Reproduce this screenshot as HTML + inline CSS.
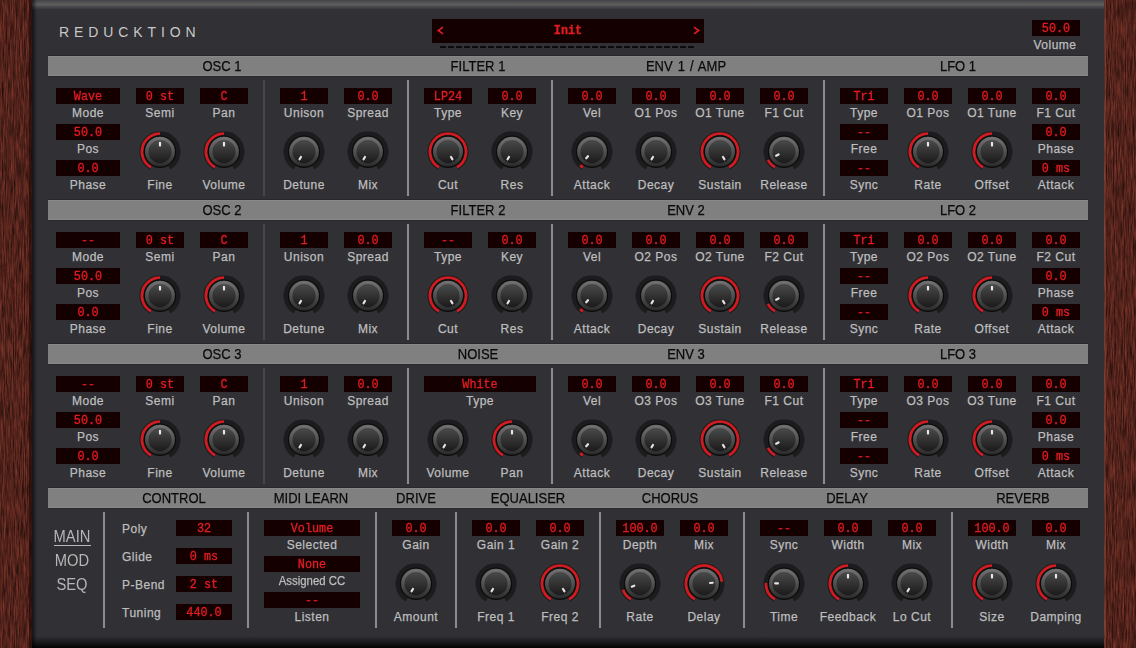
<!DOCTYPE html><html><head><meta charset="utf-8"><style>
*{margin:0;padding:0;box-sizing:border-box}
html,body{width:1136px;height:648px;overflow:hidden}
body{position:relative;background:#5a2820;font-family:"Liberation Sans",sans-serif}
.wood{position:absolute;top:0;height:648px;background:
 repeating-linear-gradient(90deg,rgba(30,8,4,.35) 0 1px,rgba(0,0,0,0) 1px 3px,rgba(120,50,35,.25) 3px 4px,rgba(0,0,0,0) 4px 6px,rgba(20,5,2,.3) 6px 7px,rgba(0,0,0,0) 7px 10px),#5c2920}
.panel{position:absolute;left:32px;top:0;width:1072px;height:648px;background:#303035}
.ptop{position:absolute;left:32px;top:0;width:1072px;height:11px;background:linear-gradient(#444448 0,#5e5e5e 4.5px,#404044 8px,#333337 9.5px,#303035 11px)}
.pbot{position:absolute;left:32px;top:636px;width:1072px;height:12px;background:linear-gradient(rgba(0,0,0,0),rgba(0,0,0,.35) 40%,rgba(0,0,0,.7) 75%,rgba(0,0,0,.92))}
.pl{position:absolute;left:32px;top:0;width:5px;height:648px;background:linear-gradient(90deg,rgba(0,0,0,.6),rgba(0,0,0,0))}
.t{position:absolute;white-space:nowrap;text-align:center;font-family:"Liberation Sans",sans-serif;-webkit-text-stroke:0.25px currentColor;letter-spacing:0.5px}
.v{position:absolute;background:#140001}
.vt{position:absolute;font-family:"Liberation Mono",monospace;font-size:11.8px;line-height:16px;color:#e41c22;text-align:center;white-space:pre;-webkit-text-stroke:0.3px #e41c22;transform:scaleY(1.1)}
.h{position:absolute;height:20px;background:#808080;border-top:1px solid #888888;border-bottom:1px solid #888888;box-shadow:0 1px 0 #28282b,0 -1px 0 #28282b}
.sep{position:absolute;width:2px;background:#8c8c8c}
.sep.d{background:#464646}
.k{position:absolute}
.title{position:absolute;left:59px;top:24px;font-size:14px;line-height:16px;letter-spacing:4.9px;color:#c8c8c8}
.preset{position:absolute;left:432px;top:19px;width:272px;height:24px;background:#140001}
.arrow{position:absolute;top:22.5px;font-family:"Liberation Sans",sans-serif;font-size:13px;line-height:16px;color:#e41c22;width:12px;text-align:center}
.dash{position:absolute;left:440px;top:46px;width:254px;height:2px;background:repeating-linear-gradient(90deg,#0a0a0a 0 6px,rgba(0,0,0,0) 6px 8px)}
.ul{position:absolute;left:54px;top:545px;width:37px;height:1px;background:#b6b6b6}
</style></head><body>
<svg width="1136" height="648" style="position:absolute;left:0;top:0">
<filter id="w2" x="0" y="0" width="100%" height="100%" color-interpolation-filters="sRGB">
<feTurbulence type="fractalNoise" baseFrequency="0.9 0.05" numOctaves="4" seed="11" result="n"/>
<feColorMatrix in="n" type="matrix" values="0.5 0 0 0 0.07  0.22 0 0 0 0.025  0.17 0 0 0 0.02  0 0 0 0 1"/>
</filter>
<rect x="0" y="0" width="32" height="648" filter="url(#w2)"/>
<rect x="1104" y="0" width="32" height="648" filter="url(#w2)"/>
<rect x="29" y="0" width="3" height="648" fill="#1a0806" opacity="0.6"/>
<rect x="1104" y="0" width="2" height="648" fill="#9a5a48" opacity="0.35"/><rect x="1103" y="0" width="1" height="648" fill="#19191c"/>
</svg>
<div class="panel"></div><div class="ptop"></div><div class="pl"></div>
<svg width="0" height="0" style="position:absolute"><defs>
<linearGradient id="gr" x1="0" y1="0" x2="0" y2="1"><stop offset="0" stop-color="#727272"/><stop offset="0.5" stop-color="#525252"/><stop offset="1" stop-color="#2a2a2a"/></linearGradient>
<linearGradient id="gf" x1="0" y1="0" x2="0" y2="1"><stop offset="0" stop-color="#4a4a4a"/><stop offset="1" stop-color="#1a1a1a"/></linearGradient>
</defs></svg>
<div class="title">REDUCKTION</div><div class="preset"></div><div class="vt" style="left:432px;top:23px;width:272px;font-weight:bold">Init</div><svg class="k" style="left:432px;top:19px" width="272" height="24"><path d="M11 8.2L6.3 11.5L11 14.8" stroke="#e41c22" stroke-width="1.6" fill="none"/><path d="M262 8.2L266.7 11.5L262 14.8" stroke="#e41c22" stroke-width="1.6" fill="none"/></svg><div class="dash"></div><div class="v" style="left:1032px;top:20px;width:48px;height:16px"></div><div class="vt" style="left:1032px;top:20.66px;width:48px">50.0</div><div class="t" style="left:995.0px;top:36.83px;width:120px;font-size:12px;line-height:16px;color:#bebebe;">Volume</div><div class="h" style="left:48px;top:56px;width:1040px"></div><div class="t" style="left:122.0px;top:57.169999999999995px;width:200px;font-size:14px;line-height:18px;color:#0a0a0a;transform:scaleX(0.93);letter-spacing:0;">OSC 1</div><div class="t" style="left:378.0px;top:57.169999999999995px;width:200px;font-size:14px;line-height:18px;color:#0a0a0a;transform:scaleX(0.93);letter-spacing:0;">FILTER 1</div><div class="t" style="left:586.0px;top:57.169999999999995px;width:200px;font-size:14px;line-height:18px;color:#0a0a0a;transform:scaleX(0.93);letter-spacing:0;word-spacing:1.5px;">ENV 1 / AMP</div><div class="t" style="left:857.5px;top:57.169999999999995px;width:200px;font-size:14px;line-height:18px;color:#0a0a0a;transform:scaleX(0.93);letter-spacing:0;">LFO 1</div><div class="v" style="left:56px;top:88px;width:64px;height:16px"></div><div class="vt" style="left:56px;top:88.66px;width:64px">Wave</div><div class="t" style="left:28.0px;top:105.03px;width:120px;font-size:12px;line-height:16px;color:#bebebe;">Mode</div><div class="v" style="left:56px;top:124px;width:64px;height:16px"></div><div class="vt" style="left:56px;top:124.66000000000001px;width:64px">50.0</div><div class="t" style="left:28.0px;top:141.03px;width:120px;font-size:12px;line-height:16px;color:#bebebe;">Pos</div><div class="v" style="left:56px;top:160px;width:64px;height:16px"></div><div class="vt" style="left:56px;top:160.66000000000003px;width:64px">0.0</div><div class="t" style="left:28.0px;top:177.03px;width:120px;font-size:12px;line-height:16px;color:#bebebe;">Phase</div><div class="v" style="left:136px;top:88px;width:48px;height:16px"></div><div class="vt" style="left:136px;top:88.66px;width:48px">0 st</div><div class="t" style="left:100.0px;top:105.03px;width:120px;font-size:12px;line-height:16px;color:#bebebe;">Semi</div><div class="v" style="left:200px;top:88px;width:48px;height:16px"></div><div class="vt" style="left:200px;top:88.66px;width:48px">C</div><div class="t" style="left:164.0px;top:105.03px;width:120px;font-size:12px;line-height:16px;color:#bebebe;">Pan</div><svg class="k" style="left:136px;top:127px" width="48" height="48"><path d="M14.76 40.65A18.48 18.48 0 1 1 33.24 40.65" stroke="#1c1c1e" stroke-width="4.05" fill="none"/><path d="M15.00 40.24A18.0 18.0 0 0 1 24.00 6.65" stroke="#d01b20" stroke-width="2.9" fill="none"/><circle cx="24" cy="24.65" r="16.45" fill="#0c0c0c"/><circle cx="24" cy="24.65" r="14.9" fill="url(#gr)"/><circle cx="24" cy="24.65" r="11.55" fill="url(#gf)"/><path d="M24.00 18.55L24.00 15.85" stroke="#e6e6e6" stroke-width="2.2" stroke-linecap="round"/></svg><div class="t" style="left:100.0px;top:176.73px;width:120px;font-size:12px;line-height:16px;color:#bebebe;">Fine</div><svg class="k" style="left:200px;top:127px" width="48" height="48"><path d="M14.76 40.65A18.48 18.48 0 1 1 33.24 40.65" stroke="#1c1c1e" stroke-width="4.05" fill="none"/><path d="M15.00 40.24A18.0 18.0 0 0 1 24.00 6.65" stroke="#d01b20" stroke-width="2.9" fill="none"/><circle cx="24" cy="24.65" r="16.45" fill="#0c0c0c"/><circle cx="24" cy="24.65" r="14.9" fill="url(#gr)"/><circle cx="24" cy="24.65" r="11.55" fill="url(#gf)"/><path d="M24.00 18.55L24.00 15.85" stroke="#e6e6e6" stroke-width="2.2" stroke-linecap="round"/></svg><div class="t" style="left:164.0px;top:176.73px;width:120px;font-size:12px;line-height:16px;color:#bebebe;">Volume</div><div class="sep d" style="left:263px;top:80px;height:116px"></div><div class="v" style="left:280px;top:88px;width:48px;height:16px"></div><div class="vt" style="left:280px;top:88.66px;width:48px">1</div><div class="t" style="left:244.0px;top:105.03px;width:120px;font-size:12px;line-height:16px;color:#bebebe;">Unison</div><div class="v" style="left:344px;top:88px;width:48px;height:16px"></div><div class="vt" style="left:344px;top:88.66px;width:48px">0.0</div><div class="t" style="left:308.0px;top:105.03px;width:120px;font-size:12px;line-height:16px;color:#bebebe;">Spread</div><svg class="k" style="left:280px;top:127px" width="48" height="48"><path d="M14.76 40.65A18.48 18.48 0 1 1 33.24 40.65" stroke="#1c1c1e" stroke-width="4.05" fill="none"/><circle cx="24" cy="24.65" r="16.45" fill="#0c0c0c"/><circle cx="24" cy="24.65" r="14.9" fill="url(#gr)"/><circle cx="24" cy="24.65" r="11.55" fill="url(#gf)"/><path d="M20.95 29.93L19.60 32.27" stroke="#e6e6e6" stroke-width="2.2" stroke-linecap="round"/></svg><div class="t" style="left:244.0px;top:176.73px;width:120px;font-size:12px;line-height:16px;color:#bebebe;">Detune</div><svg class="k" style="left:344px;top:127px" width="48" height="48"><path d="M14.76 40.65A18.48 18.48 0 1 1 33.24 40.65" stroke="#1c1c1e" stroke-width="4.05" fill="none"/><circle cx="24" cy="24.65" r="16.45" fill="#0c0c0c"/><circle cx="24" cy="24.65" r="14.9" fill="url(#gr)"/><circle cx="24" cy="24.65" r="11.55" fill="url(#gf)"/><path d="M20.95 29.93L19.60 32.27" stroke="#e6e6e6" stroke-width="2.2" stroke-linecap="round"/></svg><div class="t" style="left:308.0px;top:176.73px;width:120px;font-size:12px;line-height:16px;color:#bebebe;">Mix</div><div class="sep" style="left:407px;top:80px;height:116px"></div><div class="v" style="left:424px;top:88px;width:48px;height:16px"></div><div class="vt" style="left:424px;top:88.66px;width:48px">LP24</div><div class="t" style="left:388.0px;top:105.03px;width:120px;font-size:12px;line-height:16px;color:#bebebe;">Type</div><div class="v" style="left:488px;top:88px;width:48px;height:16px"></div><div class="vt" style="left:488px;top:88.66px;width:48px">0.0</div><div class="t" style="left:452.0px;top:105.03px;width:120px;font-size:12px;line-height:16px;color:#bebebe;">Key</div><svg class="k" style="left:424px;top:127px" width="48" height="48"><path d="M14.76 40.65A18.48 18.48 0 1 1 33.24 40.65" stroke="#1c1c1e" stroke-width="4.05" fill="none"/><path d="M15.00 40.24A18.0 18.0 0 1 1 33.00 40.24" stroke="#d01b20" stroke-width="2.9" fill="none"/><circle cx="24" cy="24.65" r="16.45" fill="#0c0c0c"/><circle cx="24" cy="24.65" r="14.9" fill="url(#gr)"/><circle cx="24" cy="24.65" r="11.55" fill="url(#gf)"/><path d="M27.05 29.93L28.40 32.27" stroke="#e6e6e6" stroke-width="2.2" stroke-linecap="round"/></svg><div class="t" style="left:388.0px;top:176.73px;width:120px;font-size:12px;line-height:16px;color:#bebebe;">Cut</div><svg class="k" style="left:488px;top:127px" width="48" height="48"><path d="M14.76 40.65A18.48 18.48 0 1 1 33.24 40.65" stroke="#1c1c1e" stroke-width="4.05" fill="none"/><circle cx="24" cy="24.65" r="16.45" fill="#0c0c0c"/><circle cx="24" cy="24.65" r="14.9" fill="url(#gr)"/><circle cx="24" cy="24.65" r="11.55" fill="url(#gf)"/><path d="M20.95 29.93L19.60 32.27" stroke="#e6e6e6" stroke-width="2.2" stroke-linecap="round"/></svg><div class="t" style="left:452.0px;top:176.73px;width:120px;font-size:12px;line-height:16px;color:#bebebe;">Res</div><div class="sep" style="left:551px;top:80px;height:116px"></div><div class="v" style="left:568px;top:88px;width:48px;height:16px"></div><div class="vt" style="left:568px;top:88.66px;width:48px">0.0</div><div class="t" style="left:532.0px;top:105.03px;width:120px;font-size:12px;line-height:16px;color:#bebebe;">Vel</div><div class="v" style="left:632px;top:88px;width:48px;height:16px"></div><div class="vt" style="left:632px;top:88.66px;width:48px">0.0</div><div class="t" style="left:596.0px;top:105.03px;width:120px;font-size:12px;line-height:16px;color:#bebebe;">O1 Pos</div><div class="v" style="left:696px;top:88px;width:48px;height:16px"></div><div class="vt" style="left:696px;top:88.66px;width:48px">0.0</div><div class="t" style="left:660.0px;top:105.03px;width:120px;font-size:12px;line-height:16px;color:#bebebe;">O1 Tune</div><div class="v" style="left:760px;top:88px;width:48px;height:16px"></div><div class="vt" style="left:760px;top:88.66px;width:48px">0.0</div><div class="t" style="left:724.0px;top:105.03px;width:120px;font-size:12px;line-height:16px;color:#bebebe;">F1 Cut</div><svg class="k" style="left:568px;top:127px" width="48" height="48"><path d="M14.76 40.65A18.48 18.48 0 1 1 33.24 40.65" stroke="#1c1c1e" stroke-width="4.05" fill="none"/><path d="M15.00 40.24A18.0 18.0 0 0 1 12.17 38.21" stroke="#d01b20" stroke-width="2.9" fill="none"/><circle cx="24" cy="24.65" r="16.45" fill="#0c0c0c"/><circle cx="24" cy="24.65" r="14.9" fill="url(#gr)"/><circle cx="24" cy="24.65" r="11.55" fill="url(#gf)"/><path d="M19.99 29.25L18.22 31.28" stroke="#e6e6e6" stroke-width="2.2" stroke-linecap="round"/></svg><div class="t" style="left:532.0px;top:176.73px;width:120px;font-size:12px;line-height:16px;color:#bebebe;">Attack</div><svg class="k" style="left:632px;top:127px" width="48" height="48"><path d="M14.76 40.65A18.48 18.48 0 1 1 33.24 40.65" stroke="#1c1c1e" stroke-width="4.05" fill="none"/><circle cx="24" cy="24.65" r="16.45" fill="#0c0c0c"/><circle cx="24" cy="24.65" r="14.9" fill="url(#gr)"/><circle cx="24" cy="24.65" r="11.55" fill="url(#gf)"/><path d="M20.95 29.93L19.60 32.27" stroke="#e6e6e6" stroke-width="2.2" stroke-linecap="round"/></svg><div class="t" style="left:596.0px;top:176.73px;width:120px;font-size:12px;line-height:16px;color:#bebebe;">Decay</div><svg class="k" style="left:696px;top:127px" width="48" height="48"><path d="M14.76 40.65A18.48 18.48 0 1 1 33.24 40.65" stroke="#1c1c1e" stroke-width="4.05" fill="none"/><path d="M15.00 40.24A18.0 18.0 0 1 1 33.00 40.24" stroke="#d01b20" stroke-width="2.9" fill="none"/><circle cx="24" cy="24.65" r="16.45" fill="#0c0c0c"/><circle cx="24" cy="24.65" r="14.9" fill="url(#gr)"/><circle cx="24" cy="24.65" r="11.55" fill="url(#gf)"/><path d="M27.05 29.93L28.40 32.27" stroke="#e6e6e6" stroke-width="2.2" stroke-linecap="round"/></svg><div class="t" style="left:660.0px;top:176.73px;width:120px;font-size:12px;line-height:16px;color:#bebebe;">Sustain</div><svg class="k" style="left:760px;top:127px" width="48" height="48"><path d="M14.76 40.65A18.48 18.48 0 1 1 33.24 40.65" stroke="#1c1c1e" stroke-width="4.05" fill="none"/><path d="M15.00 40.24A18.0 18.0 0 0 1 7.96 32.82" stroke="#d01b20" stroke-width="2.9" fill="none"/><circle cx="24" cy="24.65" r="16.45" fill="#0c0c0c"/><circle cx="24" cy="24.65" r="14.9" fill="url(#gr)"/><circle cx="24" cy="24.65" r="11.55" fill="url(#gf)"/><path d="M18.56 27.42L16.16 28.65" stroke="#e6e6e6" stroke-width="2.2" stroke-linecap="round"/></svg><div class="t" style="left:724.0px;top:176.73px;width:120px;font-size:12px;line-height:16px;color:#bebebe;">Release</div><div class="sep" style="left:823px;top:80px;height:116px"></div><div class="v" style="left:840px;top:88px;width:48px;height:16px"></div><div class="vt" style="left:840px;top:88.66px;width:48px">Tri</div><div class="t" style="left:804.0px;top:105.03px;width:120px;font-size:12px;line-height:16px;color:#bebebe;">Type</div><div class="v" style="left:904px;top:88px;width:48px;height:16px"></div><div class="vt" style="left:904px;top:88.66px;width:48px">0.0</div><div class="t" style="left:868.0px;top:105.03px;width:120px;font-size:12px;line-height:16px;color:#bebebe;">O1 Pos</div><div class="v" style="left:968px;top:88px;width:48px;height:16px"></div><div class="vt" style="left:968px;top:88.66px;width:48px">0.0</div><div class="t" style="left:932.0px;top:105.03px;width:120px;font-size:12px;line-height:16px;color:#bebebe;">O1 Tune</div><div class="v" style="left:1032px;top:88px;width:48px;height:16px"></div><div class="vt" style="left:1032px;top:88.66px;width:48px">0.0</div><div class="t" style="left:996.0px;top:105.03px;width:120px;font-size:12px;line-height:16px;color:#bebebe;">F1 Cut</div><div class="v" style="left:840px;top:124px;width:48px;height:16px"></div><div class="vt" style="left:840px;top:124.66000000000001px;width:48px">--</div><div class="t" style="left:804.0px;top:141.03px;width:120px;font-size:12px;line-height:16px;color:#bebebe;">Free</div><div class="v" style="left:840px;top:160px;width:48px;height:16px"></div><div class="vt" style="left:840px;top:160.66000000000003px;width:48px">--</div><div class="t" style="left:804.0px;top:177.03px;width:120px;font-size:12px;line-height:16px;color:#bebebe;">Sync</div><div class="v" style="left:1032px;top:124px;width:48px;height:16px"></div><div class="vt" style="left:1032px;top:124.66000000000001px;width:48px">0.0</div><div class="t" style="left:996.0px;top:141.03px;width:120px;font-size:12px;line-height:16px;color:#bebebe;">Phase</div><div class="v" style="left:1032px;top:160px;width:48px;height:16px"></div><div class="vt" style="left:1032px;top:160.66000000000003px;width:48px">0 ms</div><div class="t" style="left:996.0px;top:177.03px;width:120px;font-size:12px;line-height:16px;color:#bebebe;">Attack</div><svg class="k" style="left:904px;top:127px" width="48" height="48"><path d="M14.76 40.65A18.48 18.48 0 1 1 33.24 40.65" stroke="#1c1c1e" stroke-width="4.05" fill="none"/><path d="M15.00 40.24A18.0 18.0 0 0 1 24.00 6.65" stroke="#d01b20" stroke-width="2.9" fill="none"/><circle cx="24" cy="24.65" r="16.45" fill="#0c0c0c"/><circle cx="24" cy="24.65" r="14.9" fill="url(#gr)"/><circle cx="24" cy="24.65" r="11.55" fill="url(#gf)"/><path d="M24.00 18.55L24.00 15.85" stroke="#e6e6e6" stroke-width="2.2" stroke-linecap="round"/></svg><div class="t" style="left:868.0px;top:176.73px;width:120px;font-size:12px;line-height:16px;color:#bebebe;">Rate</div><svg class="k" style="left:968px;top:127px" width="48" height="48"><path d="M14.76 40.65A18.48 18.48 0 1 1 33.24 40.65" stroke="#1c1c1e" stroke-width="4.05" fill="none"/><path d="M15.00 40.24A18.0 18.0 0 0 1 24.00 6.65" stroke="#d01b20" stroke-width="2.9" fill="none"/><circle cx="24" cy="24.65" r="16.45" fill="#0c0c0c"/><circle cx="24" cy="24.65" r="14.9" fill="url(#gr)"/><circle cx="24" cy="24.65" r="11.55" fill="url(#gf)"/><path d="M24.00 18.55L24.00 15.85" stroke="#e6e6e6" stroke-width="2.2" stroke-linecap="round"/></svg><div class="t" style="left:932.0px;top:176.73px;width:120px;font-size:12px;line-height:16px;color:#bebebe;">Offset</div><div class="h" style="left:48px;top:200px;width:1040px"></div><div class="t" style="left:122.0px;top:201.17000000000002px;width:200px;font-size:14px;line-height:18px;color:#0a0a0a;transform:scaleX(0.93);letter-spacing:0;">OSC 2</div><div class="t" style="left:378.0px;top:201.17000000000002px;width:200px;font-size:14px;line-height:18px;color:#0a0a0a;transform:scaleX(0.93);letter-spacing:0;">FILTER 2</div><div class="t" style="left:586.0px;top:201.17000000000002px;width:200px;font-size:14px;line-height:18px;color:#0a0a0a;transform:scaleX(0.93);letter-spacing:0;">ENV 2</div><div class="t" style="left:857.5px;top:201.17000000000002px;width:200px;font-size:14px;line-height:18px;color:#0a0a0a;transform:scaleX(0.93);letter-spacing:0;">LFO 2</div><div class="v" style="left:56px;top:232px;width:64px;height:16px"></div><div class="vt" style="left:56px;top:232.66000000000003px;width:64px">--</div><div class="t" style="left:28.0px;top:249.03px;width:120px;font-size:12px;line-height:16px;color:#bebebe;">Mode</div><div class="v" style="left:56px;top:268px;width:64px;height:16px"></div><div class="vt" style="left:56px;top:268.66px;width:64px">50.0</div><div class="t" style="left:28.0px;top:285.03px;width:120px;font-size:12px;line-height:16px;color:#bebebe;">Pos</div><div class="v" style="left:56px;top:304px;width:64px;height:16px"></div><div class="vt" style="left:56px;top:304.66px;width:64px">0.0</div><div class="t" style="left:28.0px;top:321.03px;width:120px;font-size:12px;line-height:16px;color:#bebebe;">Phase</div><div class="v" style="left:136px;top:232px;width:48px;height:16px"></div><div class="vt" style="left:136px;top:232.66000000000003px;width:48px">0 st</div><div class="t" style="left:100.0px;top:249.03px;width:120px;font-size:12px;line-height:16px;color:#bebebe;">Semi</div><div class="v" style="left:200px;top:232px;width:48px;height:16px"></div><div class="vt" style="left:200px;top:232.66000000000003px;width:48px">C</div><div class="t" style="left:164.0px;top:249.03px;width:120px;font-size:12px;line-height:16px;color:#bebebe;">Pan</div><svg class="k" style="left:136px;top:271px" width="48" height="48"><path d="M14.76 40.65A18.48 18.48 0 1 1 33.24 40.65" stroke="#1c1c1e" stroke-width="4.05" fill="none"/><path d="M15.00 40.24A18.0 18.0 0 0 1 24.00 6.65" stroke="#d01b20" stroke-width="2.9" fill="none"/><circle cx="24" cy="24.65" r="16.45" fill="#0c0c0c"/><circle cx="24" cy="24.65" r="14.9" fill="url(#gr)"/><circle cx="24" cy="24.65" r="11.55" fill="url(#gf)"/><path d="M24.00 18.55L24.00 15.85" stroke="#e6e6e6" stroke-width="2.2" stroke-linecap="round"/></svg><div class="t" style="left:100.0px;top:320.72999999999996px;width:120px;font-size:12px;line-height:16px;color:#bebebe;">Fine</div><svg class="k" style="left:200px;top:271px" width="48" height="48"><path d="M14.76 40.65A18.48 18.48 0 1 1 33.24 40.65" stroke="#1c1c1e" stroke-width="4.05" fill="none"/><path d="M15.00 40.24A18.0 18.0 0 0 1 24.00 6.65" stroke="#d01b20" stroke-width="2.9" fill="none"/><circle cx="24" cy="24.65" r="16.45" fill="#0c0c0c"/><circle cx="24" cy="24.65" r="14.9" fill="url(#gr)"/><circle cx="24" cy="24.65" r="11.55" fill="url(#gf)"/><path d="M24.00 18.55L24.00 15.85" stroke="#e6e6e6" stroke-width="2.2" stroke-linecap="round"/></svg><div class="t" style="left:164.0px;top:320.72999999999996px;width:120px;font-size:12px;line-height:16px;color:#bebebe;">Volume</div><div class="sep d" style="left:263px;top:224px;height:116px"></div><div class="v" style="left:280px;top:232px;width:48px;height:16px"></div><div class="vt" style="left:280px;top:232.66000000000003px;width:48px">1</div><div class="t" style="left:244.0px;top:249.03px;width:120px;font-size:12px;line-height:16px;color:#bebebe;">Unison</div><div class="v" style="left:344px;top:232px;width:48px;height:16px"></div><div class="vt" style="left:344px;top:232.66000000000003px;width:48px">0.0</div><div class="t" style="left:308.0px;top:249.03px;width:120px;font-size:12px;line-height:16px;color:#bebebe;">Spread</div><svg class="k" style="left:280px;top:271px" width="48" height="48"><path d="M14.76 40.65A18.48 18.48 0 1 1 33.24 40.65" stroke="#1c1c1e" stroke-width="4.05" fill="none"/><circle cx="24" cy="24.65" r="16.45" fill="#0c0c0c"/><circle cx="24" cy="24.65" r="14.9" fill="url(#gr)"/><circle cx="24" cy="24.65" r="11.55" fill="url(#gf)"/><path d="M20.95 29.93L19.60 32.27" stroke="#e6e6e6" stroke-width="2.2" stroke-linecap="round"/></svg><div class="t" style="left:244.0px;top:320.72999999999996px;width:120px;font-size:12px;line-height:16px;color:#bebebe;">Detune</div><svg class="k" style="left:344px;top:271px" width="48" height="48"><path d="M14.76 40.65A18.48 18.48 0 1 1 33.24 40.65" stroke="#1c1c1e" stroke-width="4.05" fill="none"/><circle cx="24" cy="24.65" r="16.45" fill="#0c0c0c"/><circle cx="24" cy="24.65" r="14.9" fill="url(#gr)"/><circle cx="24" cy="24.65" r="11.55" fill="url(#gf)"/><path d="M20.95 29.93L19.60 32.27" stroke="#e6e6e6" stroke-width="2.2" stroke-linecap="round"/></svg><div class="t" style="left:308.0px;top:320.72999999999996px;width:120px;font-size:12px;line-height:16px;color:#bebebe;">Mix</div><div class="sep" style="left:407px;top:224px;height:116px"></div><div class="v" style="left:424px;top:232px;width:48px;height:16px"></div><div class="vt" style="left:424px;top:232.66000000000003px;width:48px">--</div><div class="t" style="left:388.0px;top:249.03px;width:120px;font-size:12px;line-height:16px;color:#bebebe;">Type</div><div class="v" style="left:488px;top:232px;width:48px;height:16px"></div><div class="vt" style="left:488px;top:232.66000000000003px;width:48px">0.0</div><div class="t" style="left:452.0px;top:249.03px;width:120px;font-size:12px;line-height:16px;color:#bebebe;">Key</div><svg class="k" style="left:424px;top:271px" width="48" height="48"><path d="M14.76 40.65A18.48 18.48 0 1 1 33.24 40.65" stroke="#1c1c1e" stroke-width="4.05" fill="none"/><path d="M15.00 40.24A18.0 18.0 0 1 1 33.00 40.24" stroke="#d01b20" stroke-width="2.9" fill="none"/><circle cx="24" cy="24.65" r="16.45" fill="#0c0c0c"/><circle cx="24" cy="24.65" r="14.9" fill="url(#gr)"/><circle cx="24" cy="24.65" r="11.55" fill="url(#gf)"/><path d="M27.05 29.93L28.40 32.27" stroke="#e6e6e6" stroke-width="2.2" stroke-linecap="round"/></svg><div class="t" style="left:388.0px;top:320.72999999999996px;width:120px;font-size:12px;line-height:16px;color:#bebebe;">Cut</div><svg class="k" style="left:488px;top:271px" width="48" height="48"><path d="M14.76 40.65A18.48 18.48 0 1 1 33.24 40.65" stroke="#1c1c1e" stroke-width="4.05" fill="none"/><circle cx="24" cy="24.65" r="16.45" fill="#0c0c0c"/><circle cx="24" cy="24.65" r="14.9" fill="url(#gr)"/><circle cx="24" cy="24.65" r="11.55" fill="url(#gf)"/><path d="M20.95 29.93L19.60 32.27" stroke="#e6e6e6" stroke-width="2.2" stroke-linecap="round"/></svg><div class="t" style="left:452.0px;top:320.72999999999996px;width:120px;font-size:12px;line-height:16px;color:#bebebe;">Res</div><div class="sep" style="left:551px;top:224px;height:116px"></div><div class="v" style="left:568px;top:232px;width:48px;height:16px"></div><div class="vt" style="left:568px;top:232.66000000000003px;width:48px">0.0</div><div class="t" style="left:532.0px;top:249.03px;width:120px;font-size:12px;line-height:16px;color:#bebebe;">Vel</div><div class="v" style="left:632px;top:232px;width:48px;height:16px"></div><div class="vt" style="left:632px;top:232.66000000000003px;width:48px">0.0</div><div class="t" style="left:596.0px;top:249.03px;width:120px;font-size:12px;line-height:16px;color:#bebebe;">O2 Pos</div><div class="v" style="left:696px;top:232px;width:48px;height:16px"></div><div class="vt" style="left:696px;top:232.66000000000003px;width:48px">0.0</div><div class="t" style="left:660.0px;top:249.03px;width:120px;font-size:12px;line-height:16px;color:#bebebe;">O2 Tune</div><div class="v" style="left:760px;top:232px;width:48px;height:16px"></div><div class="vt" style="left:760px;top:232.66000000000003px;width:48px">0.0</div><div class="t" style="left:724.0px;top:249.03px;width:120px;font-size:12px;line-height:16px;color:#bebebe;">F2 Cut</div><svg class="k" style="left:568px;top:271px" width="48" height="48"><path d="M14.76 40.65A18.48 18.48 0 1 1 33.24 40.65" stroke="#1c1c1e" stroke-width="4.05" fill="none"/><path d="M15.00 40.24A18.0 18.0 0 0 1 12.17 38.21" stroke="#d01b20" stroke-width="2.9" fill="none"/><circle cx="24" cy="24.65" r="16.45" fill="#0c0c0c"/><circle cx="24" cy="24.65" r="14.9" fill="url(#gr)"/><circle cx="24" cy="24.65" r="11.55" fill="url(#gf)"/><path d="M19.99 29.25L18.22 31.28" stroke="#e6e6e6" stroke-width="2.2" stroke-linecap="round"/></svg><div class="t" style="left:532.0px;top:320.72999999999996px;width:120px;font-size:12px;line-height:16px;color:#bebebe;">Attack</div><svg class="k" style="left:632px;top:271px" width="48" height="48"><path d="M14.76 40.65A18.48 18.48 0 1 1 33.24 40.65" stroke="#1c1c1e" stroke-width="4.05" fill="none"/><circle cx="24" cy="24.65" r="16.45" fill="#0c0c0c"/><circle cx="24" cy="24.65" r="14.9" fill="url(#gr)"/><circle cx="24" cy="24.65" r="11.55" fill="url(#gf)"/><path d="M20.95 29.93L19.60 32.27" stroke="#e6e6e6" stroke-width="2.2" stroke-linecap="round"/></svg><div class="t" style="left:596.0px;top:320.72999999999996px;width:120px;font-size:12px;line-height:16px;color:#bebebe;">Decay</div><svg class="k" style="left:696px;top:271px" width="48" height="48"><path d="M14.76 40.65A18.48 18.48 0 1 1 33.24 40.65" stroke="#1c1c1e" stroke-width="4.05" fill="none"/><path d="M15.00 40.24A18.0 18.0 0 1 1 33.00 40.24" stroke="#d01b20" stroke-width="2.9" fill="none"/><circle cx="24" cy="24.65" r="16.45" fill="#0c0c0c"/><circle cx="24" cy="24.65" r="14.9" fill="url(#gr)"/><circle cx="24" cy="24.65" r="11.55" fill="url(#gf)"/><path d="M27.05 29.93L28.40 32.27" stroke="#e6e6e6" stroke-width="2.2" stroke-linecap="round"/></svg><div class="t" style="left:660.0px;top:320.72999999999996px;width:120px;font-size:12px;line-height:16px;color:#bebebe;">Sustain</div><svg class="k" style="left:760px;top:271px" width="48" height="48"><path d="M14.76 40.65A18.48 18.48 0 1 1 33.24 40.65" stroke="#1c1c1e" stroke-width="4.05" fill="none"/><path d="M15.00 40.24A18.0 18.0 0 0 1 7.96 32.82" stroke="#d01b20" stroke-width="2.9" fill="none"/><circle cx="24" cy="24.65" r="16.45" fill="#0c0c0c"/><circle cx="24" cy="24.65" r="14.9" fill="url(#gr)"/><circle cx="24" cy="24.65" r="11.55" fill="url(#gf)"/><path d="M18.56 27.42L16.16 28.65" stroke="#e6e6e6" stroke-width="2.2" stroke-linecap="round"/></svg><div class="t" style="left:724.0px;top:320.72999999999996px;width:120px;font-size:12px;line-height:16px;color:#bebebe;">Release</div><div class="sep" style="left:823px;top:224px;height:116px"></div><div class="v" style="left:840px;top:232px;width:48px;height:16px"></div><div class="vt" style="left:840px;top:232.66000000000003px;width:48px">Tri</div><div class="t" style="left:804.0px;top:249.03px;width:120px;font-size:12px;line-height:16px;color:#bebebe;">Type</div><div class="v" style="left:904px;top:232px;width:48px;height:16px"></div><div class="vt" style="left:904px;top:232.66000000000003px;width:48px">0.0</div><div class="t" style="left:868.0px;top:249.03px;width:120px;font-size:12px;line-height:16px;color:#bebebe;">O2 Pos</div><div class="v" style="left:968px;top:232px;width:48px;height:16px"></div><div class="vt" style="left:968px;top:232.66000000000003px;width:48px">0.0</div><div class="t" style="left:932.0px;top:249.03px;width:120px;font-size:12px;line-height:16px;color:#bebebe;">O2 Tune</div><div class="v" style="left:1032px;top:232px;width:48px;height:16px"></div><div class="vt" style="left:1032px;top:232.66000000000003px;width:48px">0.0</div><div class="t" style="left:996.0px;top:249.03px;width:120px;font-size:12px;line-height:16px;color:#bebebe;">F2 Cut</div><div class="v" style="left:840px;top:268px;width:48px;height:16px"></div><div class="vt" style="left:840px;top:268.66px;width:48px">--</div><div class="t" style="left:804.0px;top:285.03px;width:120px;font-size:12px;line-height:16px;color:#bebebe;">Free</div><div class="v" style="left:840px;top:304px;width:48px;height:16px"></div><div class="vt" style="left:840px;top:304.66px;width:48px">--</div><div class="t" style="left:804.0px;top:321.03px;width:120px;font-size:12px;line-height:16px;color:#bebebe;">Sync</div><div class="v" style="left:1032px;top:268px;width:48px;height:16px"></div><div class="vt" style="left:1032px;top:268.66px;width:48px">0.0</div><div class="t" style="left:996.0px;top:285.03px;width:120px;font-size:12px;line-height:16px;color:#bebebe;">Phase</div><div class="v" style="left:1032px;top:304px;width:48px;height:16px"></div><div class="vt" style="left:1032px;top:304.66px;width:48px">0 ms</div><div class="t" style="left:996.0px;top:321.03px;width:120px;font-size:12px;line-height:16px;color:#bebebe;">Attack</div><svg class="k" style="left:904px;top:271px" width="48" height="48"><path d="M14.76 40.65A18.48 18.48 0 1 1 33.24 40.65" stroke="#1c1c1e" stroke-width="4.05" fill="none"/><path d="M15.00 40.24A18.0 18.0 0 0 1 24.00 6.65" stroke="#d01b20" stroke-width="2.9" fill="none"/><circle cx="24" cy="24.65" r="16.45" fill="#0c0c0c"/><circle cx="24" cy="24.65" r="14.9" fill="url(#gr)"/><circle cx="24" cy="24.65" r="11.55" fill="url(#gf)"/><path d="M24.00 18.55L24.00 15.85" stroke="#e6e6e6" stroke-width="2.2" stroke-linecap="round"/></svg><div class="t" style="left:868.0px;top:320.72999999999996px;width:120px;font-size:12px;line-height:16px;color:#bebebe;">Rate</div><svg class="k" style="left:968px;top:271px" width="48" height="48"><path d="M14.76 40.65A18.48 18.48 0 1 1 33.24 40.65" stroke="#1c1c1e" stroke-width="4.05" fill="none"/><path d="M15.00 40.24A18.0 18.0 0 0 1 24.00 6.65" stroke="#d01b20" stroke-width="2.9" fill="none"/><circle cx="24" cy="24.65" r="16.45" fill="#0c0c0c"/><circle cx="24" cy="24.65" r="14.9" fill="url(#gr)"/><circle cx="24" cy="24.65" r="11.55" fill="url(#gf)"/><path d="M24.00 18.55L24.00 15.85" stroke="#e6e6e6" stroke-width="2.2" stroke-linecap="round"/></svg><div class="t" style="left:932.0px;top:320.72999999999996px;width:120px;font-size:12px;line-height:16px;color:#bebebe;">Offset</div><div class="h" style="left:48px;top:344px;width:1040px"></div><div class="t" style="left:122.0px;top:345.17px;width:200px;font-size:14px;line-height:18px;color:#0a0a0a;transform:scaleX(0.93);letter-spacing:0;">OSC 3</div><div class="t" style="left:378.0px;top:345.17px;width:200px;font-size:14px;line-height:18px;color:#0a0a0a;transform:scaleX(0.93);letter-spacing:0;">NOISE</div><div class="t" style="left:586.0px;top:345.17px;width:200px;font-size:14px;line-height:18px;color:#0a0a0a;transform:scaleX(0.93);letter-spacing:0;">ENV 3</div><div class="t" style="left:857.5px;top:345.17px;width:200px;font-size:14px;line-height:18px;color:#0a0a0a;transform:scaleX(0.93);letter-spacing:0;">LFO 3</div><div class="v" style="left:56px;top:376px;width:64px;height:16px"></div><div class="vt" style="left:56px;top:376.66px;width:64px">--</div><div class="t" style="left:28.0px;top:393.03px;width:120px;font-size:12px;line-height:16px;color:#bebebe;">Mode</div><div class="v" style="left:56px;top:412px;width:64px;height:16px"></div><div class="vt" style="left:56px;top:412.66px;width:64px">50.0</div><div class="t" style="left:28.0px;top:429.03px;width:120px;font-size:12px;line-height:16px;color:#bebebe;">Pos</div><div class="v" style="left:56px;top:448px;width:64px;height:16px"></div><div class="vt" style="left:56px;top:448.66px;width:64px">0.0</div><div class="t" style="left:28.0px;top:465.03px;width:120px;font-size:12px;line-height:16px;color:#bebebe;">Phase</div><div class="v" style="left:136px;top:376px;width:48px;height:16px"></div><div class="vt" style="left:136px;top:376.66px;width:48px">0 st</div><div class="t" style="left:100.0px;top:393.03px;width:120px;font-size:12px;line-height:16px;color:#bebebe;">Semi</div><div class="v" style="left:200px;top:376px;width:48px;height:16px"></div><div class="vt" style="left:200px;top:376.66px;width:48px">C</div><div class="t" style="left:164.0px;top:393.03px;width:120px;font-size:12px;line-height:16px;color:#bebebe;">Pan</div><svg class="k" style="left:136px;top:415px" width="48" height="48"><path d="M14.76 40.65A18.48 18.48 0 1 1 33.24 40.65" stroke="#1c1c1e" stroke-width="4.05" fill="none"/><path d="M15.00 40.24A18.0 18.0 0 0 1 24.00 6.65" stroke="#d01b20" stroke-width="2.9" fill="none"/><circle cx="24" cy="24.65" r="16.45" fill="#0c0c0c"/><circle cx="24" cy="24.65" r="14.9" fill="url(#gr)"/><circle cx="24" cy="24.65" r="11.55" fill="url(#gf)"/><path d="M24.00 18.55L24.00 15.85" stroke="#e6e6e6" stroke-width="2.2" stroke-linecap="round"/></svg><div class="t" style="left:100.0px;top:464.72999999999996px;width:120px;font-size:12px;line-height:16px;color:#bebebe;">Fine</div><svg class="k" style="left:200px;top:415px" width="48" height="48"><path d="M14.76 40.65A18.48 18.48 0 1 1 33.24 40.65" stroke="#1c1c1e" stroke-width="4.05" fill="none"/><path d="M15.00 40.24A18.0 18.0 0 0 1 24.00 6.65" stroke="#d01b20" stroke-width="2.9" fill="none"/><circle cx="24" cy="24.65" r="16.45" fill="#0c0c0c"/><circle cx="24" cy="24.65" r="14.9" fill="url(#gr)"/><circle cx="24" cy="24.65" r="11.55" fill="url(#gf)"/><path d="M24.00 18.55L24.00 15.85" stroke="#e6e6e6" stroke-width="2.2" stroke-linecap="round"/></svg><div class="t" style="left:164.0px;top:464.72999999999996px;width:120px;font-size:12px;line-height:16px;color:#bebebe;">Volume</div><div class="sep d" style="left:263px;top:368px;height:116px"></div><div class="v" style="left:280px;top:376px;width:48px;height:16px"></div><div class="vt" style="left:280px;top:376.66px;width:48px">1</div><div class="t" style="left:244.0px;top:393.03px;width:120px;font-size:12px;line-height:16px;color:#bebebe;">Unison</div><div class="v" style="left:344px;top:376px;width:48px;height:16px"></div><div class="vt" style="left:344px;top:376.66px;width:48px">0.0</div><div class="t" style="left:308.0px;top:393.03px;width:120px;font-size:12px;line-height:16px;color:#bebebe;">Spread</div><svg class="k" style="left:280px;top:415px" width="48" height="48"><path d="M14.76 40.65A18.48 18.48 0 1 1 33.24 40.65" stroke="#1c1c1e" stroke-width="4.05" fill="none"/><circle cx="24" cy="24.65" r="16.45" fill="#0c0c0c"/><circle cx="24" cy="24.65" r="14.9" fill="url(#gr)"/><circle cx="24" cy="24.65" r="11.55" fill="url(#gf)"/><path d="M20.95 29.93L19.60 32.27" stroke="#e6e6e6" stroke-width="2.2" stroke-linecap="round"/></svg><div class="t" style="left:244.0px;top:464.72999999999996px;width:120px;font-size:12px;line-height:16px;color:#bebebe;">Detune</div><svg class="k" style="left:344px;top:415px" width="48" height="48"><path d="M14.76 40.65A18.48 18.48 0 1 1 33.24 40.65" stroke="#1c1c1e" stroke-width="4.05" fill="none"/><circle cx="24" cy="24.65" r="16.45" fill="#0c0c0c"/><circle cx="24" cy="24.65" r="14.9" fill="url(#gr)"/><circle cx="24" cy="24.65" r="11.55" fill="url(#gf)"/><path d="M20.95 29.93L19.60 32.27" stroke="#e6e6e6" stroke-width="2.2" stroke-linecap="round"/></svg><div class="t" style="left:308.0px;top:464.72999999999996px;width:120px;font-size:12px;line-height:16px;color:#bebebe;">Mix</div><div class="sep" style="left:407px;top:368px;height:116px"></div><div class="v" style="left:424px;top:376px;width:112px;height:16px"></div><div class="vt" style="left:424px;top:376.66px;width:112px">White</div><div class="t" style="left:420.0px;top:393.03px;width:120px;font-size:12px;line-height:16px;color:#bebebe;">Type</div><svg class="k" style="left:424px;top:415px" width="48" height="48"><path d="M14.76 40.65A18.48 18.48 0 1 1 33.24 40.65" stroke="#1c1c1e" stroke-width="4.05" fill="none"/><circle cx="24" cy="24.65" r="16.45" fill="#0c0c0c"/><circle cx="24" cy="24.65" r="14.9" fill="url(#gr)"/><circle cx="24" cy="24.65" r="11.55" fill="url(#gf)"/><path d="M20.95 29.93L19.60 32.27" stroke="#e6e6e6" stroke-width="2.2" stroke-linecap="round"/></svg><div class="t" style="left:388.0px;top:464.72999999999996px;width:120px;font-size:12px;line-height:16px;color:#bebebe;">Volume</div><svg class="k" style="left:488px;top:415px" width="48" height="48"><path d="M14.76 40.65A18.48 18.48 0 1 1 33.24 40.65" stroke="#1c1c1e" stroke-width="4.05" fill="none"/><path d="M15.00 40.24A18.0 18.0 0 0 1 24.00 6.65" stroke="#d01b20" stroke-width="2.9" fill="none"/><circle cx="24" cy="24.65" r="16.45" fill="#0c0c0c"/><circle cx="24" cy="24.65" r="14.9" fill="url(#gr)"/><circle cx="24" cy="24.65" r="11.55" fill="url(#gf)"/><path d="M24.00 18.55L24.00 15.85" stroke="#e6e6e6" stroke-width="2.2" stroke-linecap="round"/></svg><div class="t" style="left:452.0px;top:464.72999999999996px;width:120px;font-size:12px;line-height:16px;color:#bebebe;">Pan</div><div class="sep" style="left:551px;top:368px;height:116px"></div><div class="v" style="left:568px;top:376px;width:48px;height:16px"></div><div class="vt" style="left:568px;top:376.66px;width:48px">0.0</div><div class="t" style="left:532.0px;top:393.03px;width:120px;font-size:12px;line-height:16px;color:#bebebe;">Vel</div><div class="v" style="left:632px;top:376px;width:48px;height:16px"></div><div class="vt" style="left:632px;top:376.66px;width:48px">0.0</div><div class="t" style="left:596.0px;top:393.03px;width:120px;font-size:12px;line-height:16px;color:#bebebe;">O3 Pos</div><div class="v" style="left:696px;top:376px;width:48px;height:16px"></div><div class="vt" style="left:696px;top:376.66px;width:48px">0.0</div><div class="t" style="left:660.0px;top:393.03px;width:120px;font-size:12px;line-height:16px;color:#bebebe;">O3 Tune</div><div class="v" style="left:760px;top:376px;width:48px;height:16px"></div><div class="vt" style="left:760px;top:376.66px;width:48px">0.0</div><div class="t" style="left:724.0px;top:393.03px;width:120px;font-size:12px;line-height:16px;color:#bebebe;">F1 Cut</div><svg class="k" style="left:568px;top:415px" width="48" height="48"><path d="M14.76 40.65A18.48 18.48 0 1 1 33.24 40.65" stroke="#1c1c1e" stroke-width="4.05" fill="none"/><path d="M15.00 40.24A18.0 18.0 0 0 1 12.17 38.21" stroke="#d01b20" stroke-width="2.9" fill="none"/><circle cx="24" cy="24.65" r="16.45" fill="#0c0c0c"/><circle cx="24" cy="24.65" r="14.9" fill="url(#gr)"/><circle cx="24" cy="24.65" r="11.55" fill="url(#gf)"/><path d="M19.99 29.25L18.22 31.28" stroke="#e6e6e6" stroke-width="2.2" stroke-linecap="round"/></svg><div class="t" style="left:532.0px;top:464.72999999999996px;width:120px;font-size:12px;line-height:16px;color:#bebebe;">Attack</div><svg class="k" style="left:632px;top:415px" width="48" height="48"><path d="M14.76 40.65A18.48 18.48 0 1 1 33.24 40.65" stroke="#1c1c1e" stroke-width="4.05" fill="none"/><circle cx="24" cy="24.65" r="16.45" fill="#0c0c0c"/><circle cx="24" cy="24.65" r="14.9" fill="url(#gr)"/><circle cx="24" cy="24.65" r="11.55" fill="url(#gf)"/><path d="M20.95 29.93L19.60 32.27" stroke="#e6e6e6" stroke-width="2.2" stroke-linecap="round"/></svg><div class="t" style="left:596.0px;top:464.72999999999996px;width:120px;font-size:12px;line-height:16px;color:#bebebe;">Decay</div><svg class="k" style="left:696px;top:415px" width="48" height="48"><path d="M14.76 40.65A18.48 18.48 0 1 1 33.24 40.65" stroke="#1c1c1e" stroke-width="4.05" fill="none"/><path d="M15.00 40.24A18.0 18.0 0 1 1 33.00 40.24" stroke="#d01b20" stroke-width="2.9" fill="none"/><circle cx="24" cy="24.65" r="16.45" fill="#0c0c0c"/><circle cx="24" cy="24.65" r="14.9" fill="url(#gr)"/><circle cx="24" cy="24.65" r="11.55" fill="url(#gf)"/><path d="M27.05 29.93L28.40 32.27" stroke="#e6e6e6" stroke-width="2.2" stroke-linecap="round"/></svg><div class="t" style="left:660.0px;top:464.72999999999996px;width:120px;font-size:12px;line-height:16px;color:#bebebe;">Sustain</div><svg class="k" style="left:760px;top:415px" width="48" height="48"><path d="M14.76 40.65A18.48 18.48 0 1 1 33.24 40.65" stroke="#1c1c1e" stroke-width="4.05" fill="none"/><path d="M15.00 40.24A18.0 18.0 0 0 1 7.96 32.82" stroke="#d01b20" stroke-width="2.9" fill="none"/><circle cx="24" cy="24.65" r="16.45" fill="#0c0c0c"/><circle cx="24" cy="24.65" r="14.9" fill="url(#gr)"/><circle cx="24" cy="24.65" r="11.55" fill="url(#gf)"/><path d="M18.56 27.42L16.16 28.65" stroke="#e6e6e6" stroke-width="2.2" stroke-linecap="round"/></svg><div class="t" style="left:724.0px;top:464.72999999999996px;width:120px;font-size:12px;line-height:16px;color:#bebebe;">Release</div><div class="sep" style="left:823px;top:368px;height:116px"></div><div class="v" style="left:840px;top:376px;width:48px;height:16px"></div><div class="vt" style="left:840px;top:376.66px;width:48px">Tri</div><div class="t" style="left:804.0px;top:393.03px;width:120px;font-size:12px;line-height:16px;color:#bebebe;">Type</div><div class="v" style="left:904px;top:376px;width:48px;height:16px"></div><div class="vt" style="left:904px;top:376.66px;width:48px">0.0</div><div class="t" style="left:868.0px;top:393.03px;width:120px;font-size:12px;line-height:16px;color:#bebebe;">O3 Pos</div><div class="v" style="left:968px;top:376px;width:48px;height:16px"></div><div class="vt" style="left:968px;top:376.66px;width:48px">0.0</div><div class="t" style="left:932.0px;top:393.03px;width:120px;font-size:12px;line-height:16px;color:#bebebe;">O3 Tune</div><div class="v" style="left:1032px;top:376px;width:48px;height:16px"></div><div class="vt" style="left:1032px;top:376.66px;width:48px">0.0</div><div class="t" style="left:996.0px;top:393.03px;width:120px;font-size:12px;line-height:16px;color:#bebebe;">F1 Cut</div><div class="v" style="left:840px;top:412px;width:48px;height:16px"></div><div class="vt" style="left:840px;top:412.66px;width:48px">--</div><div class="t" style="left:804.0px;top:429.03px;width:120px;font-size:12px;line-height:16px;color:#bebebe;">Free</div><div class="v" style="left:840px;top:448px;width:48px;height:16px"></div><div class="vt" style="left:840px;top:448.66px;width:48px">--</div><div class="t" style="left:804.0px;top:465.03px;width:120px;font-size:12px;line-height:16px;color:#bebebe;">Sync</div><div class="v" style="left:1032px;top:412px;width:48px;height:16px"></div><div class="vt" style="left:1032px;top:412.66px;width:48px">0.0</div><div class="t" style="left:996.0px;top:429.03px;width:120px;font-size:12px;line-height:16px;color:#bebebe;">Phase</div><div class="v" style="left:1032px;top:448px;width:48px;height:16px"></div><div class="vt" style="left:1032px;top:448.66px;width:48px">0 ms</div><div class="t" style="left:996.0px;top:465.03px;width:120px;font-size:12px;line-height:16px;color:#bebebe;">Attack</div><svg class="k" style="left:904px;top:415px" width="48" height="48"><path d="M14.76 40.65A18.48 18.48 0 1 1 33.24 40.65" stroke="#1c1c1e" stroke-width="4.05" fill="none"/><path d="M15.00 40.24A18.0 18.0 0 0 1 24.00 6.65" stroke="#d01b20" stroke-width="2.9" fill="none"/><circle cx="24" cy="24.65" r="16.45" fill="#0c0c0c"/><circle cx="24" cy="24.65" r="14.9" fill="url(#gr)"/><circle cx="24" cy="24.65" r="11.55" fill="url(#gf)"/><path d="M24.00 18.55L24.00 15.85" stroke="#e6e6e6" stroke-width="2.2" stroke-linecap="round"/></svg><div class="t" style="left:868.0px;top:464.72999999999996px;width:120px;font-size:12px;line-height:16px;color:#bebebe;">Rate</div><svg class="k" style="left:968px;top:415px" width="48" height="48"><path d="M14.76 40.65A18.48 18.48 0 1 1 33.24 40.65" stroke="#1c1c1e" stroke-width="4.05" fill="none"/><path d="M15.00 40.24A18.0 18.0 0 0 1 24.00 6.65" stroke="#d01b20" stroke-width="2.9" fill="none"/><circle cx="24" cy="24.65" r="16.45" fill="#0c0c0c"/><circle cx="24" cy="24.65" r="14.9" fill="url(#gr)"/><circle cx="24" cy="24.65" r="11.55" fill="url(#gf)"/><path d="M24.00 18.55L24.00 15.85" stroke="#e6e6e6" stroke-width="2.2" stroke-linecap="round"/></svg><div class="t" style="left:932.0px;top:464.72999999999996px;width:120px;font-size:12px;line-height:16px;color:#bebebe;">Offset</div><div class="h" style="left:48px;top:488px;width:1040px"></div><div class="t" style="left:74.0px;top:489.17px;width:200px;font-size:14px;line-height:18px;color:#0a0a0a;transform:scaleX(0.93);letter-spacing:0;">CONTROL</div><div class="t" style="left:210.5px;top:489.17px;width:200px;font-size:14px;line-height:18px;color:#0a0a0a;transform:scaleX(0.93);letter-spacing:0;">MIDI LEARN</div><div class="t" style="left:315.5px;top:489.17px;width:200px;font-size:14px;line-height:18px;color:#0a0a0a;transform:scaleX(0.93);letter-spacing:0;">DRIVE</div><div class="t" style="left:427.70000000000005px;top:489.17px;width:200px;font-size:14px;line-height:18px;color:#0a0a0a;transform:scaleX(0.93);letter-spacing:0;">EQUALISER</div><div class="t" style="left:570.0px;top:489.17px;width:200px;font-size:14px;line-height:18px;color:#0a0a0a;transform:scaleX(0.93);letter-spacing:0;">CHORUS</div><div class="t" style="left:747.0px;top:489.17px;width:200px;font-size:14px;line-height:18px;color:#0a0a0a;transform:scaleX(0.93);letter-spacing:0;">DELAY</div><div class="t" style="left:923.0px;top:489.17px;width:200px;font-size:14px;line-height:18px;color:#0a0a0a;transform:scaleX(0.93);letter-spacing:0;">REVERB</div><div class="t" style="left:32.0px;top:526.9100000000001px;width:80px;font-size:16px;line-height:20px;color:#b6b6b6;-webkit-text-stroke:0;transform:scaleX(0.92);letter-spacing:0;">MAIN</div><div class="ul"></div><div class="t" style="left:32.0px;top:550.9100000000001px;width:80px;font-size:16px;line-height:20px;color:#b6b6b6;-webkit-text-stroke:0;transform:scaleX(0.92);letter-spacing:0;">MOD</div><div class="t" style="left:32.0px;top:574.9100000000001px;width:80px;font-size:16px;line-height:20px;color:#b6b6b6;-webkit-text-stroke:0;transform:scaleX(0.92);letter-spacing:0;">SEQ</div><div class="sep" style="left:103px;top:512px;height:116px"></div><div class="sep" style="left:247px;top:512px;height:116px"></div><div class="sep" style="left:375px;top:512px;height:116px"></div><div class="sep" style="left:455px;top:512px;height:116px"></div><div class="sep" style="left:599px;top:512px;height:116px"></div><div class="sep" style="left:743px;top:512px;height:116px"></div><div class="sep" style="left:951px;top:512px;height:116px"></div><div class="v" style="left:176px;top:520px;width:56px;height:16px"></div><div class="vt" style="left:176px;top:520.66px;width:56px">32</div><div class="t" style="left:122px;top:521.13px;text-align:left;font-size:12px;line-height:16px;color:#bebebe;">Poly</div><div class="v" style="left:176px;top:548px;width:56px;height:16px"></div><div class="vt" style="left:176px;top:548.66px;width:56px">0 ms</div><div class="t" style="left:122px;top:549.13px;text-align:left;font-size:12px;line-height:16px;color:#bebebe;">Glide</div><div class="v" style="left:176px;top:576px;width:56px;height:16px"></div><div class="vt" style="left:176px;top:576.66px;width:56px">2 st</div><div class="t" style="left:122px;top:577.13px;text-align:left;font-size:12px;line-height:16px;color:#bebebe;">P-Bend</div><div class="v" style="left:176px;top:604px;width:56px;height:16px"></div><div class="vt" style="left:176px;top:604.66px;width:56px">440.0</div><div class="t" style="left:122px;top:605.13px;text-align:left;font-size:12px;line-height:16px;color:#bebebe;">Tuning</div><div class="v" style="left:264px;top:520px;width:96px;height:16px"></div><div class="vt" style="left:264px;top:520.66px;width:96px">Volume</div><div class="t" style="left:252.0px;top:536.73px;width:120px;font-size:12px;line-height:16px;color:#bebebe;">Selected</div><div class="v" style="left:264px;top:556px;width:96px;height:16px"></div><div class="vt" style="left:264px;top:556.66px;width:96px">None</div><div class="t" style="left:252.0px;top:572.73px;width:120px;font-size:12px;line-height:16px;color:#bebebe;letter-spacing:0;transform:scaleX(0.95);">Assigned CC</div><div class="v" style="left:264px;top:592px;width:96px;height:16px"></div><div class="vt" style="left:264px;top:592.66px;width:96px">--</div><div class="t" style="left:252.0px;top:608.73px;width:120px;font-size:12px;line-height:16px;color:#bebebe;">Listen</div><div class="v" style="left:392px;top:520px;width:48px;height:16px"></div><div class="vt" style="left:392px;top:520.66px;width:48px">0.0</div><div class="t" style="left:356.0px;top:537.03px;width:120px;font-size:12px;line-height:16px;color:#bebebe;">Gain</div><svg class="k" style="left:392px;top:559px" width="48" height="48"><path d="M14.76 40.65A18.48 18.48 0 1 1 33.24 40.65" stroke="#1c1c1e" stroke-width="4.05" fill="none"/><circle cx="24" cy="24.65" r="16.45" fill="#0c0c0c"/><circle cx="24" cy="24.65" r="14.9" fill="url(#gr)"/><circle cx="24" cy="24.65" r="11.55" fill="url(#gf)"/><path d="M20.95 29.93L19.60 32.27" stroke="#e6e6e6" stroke-width="2.2" stroke-linecap="round"/></svg><div class="t" style="left:356.0px;top:608.73px;width:120px;font-size:12px;line-height:16px;color:#bebebe;">Amount</div><div class="v" style="left:472px;top:520px;width:48px;height:16px"></div><div class="vt" style="left:472px;top:520.66px;width:48px">0.0</div><div class="t" style="left:436.0px;top:537.03px;width:120px;font-size:12px;line-height:16px;color:#bebebe;">Gain 1</div><svg class="k" style="left:472px;top:559px" width="48" height="48"><path d="M14.76 40.65A18.48 18.48 0 1 1 33.24 40.65" stroke="#1c1c1e" stroke-width="4.05" fill="none"/><circle cx="24" cy="24.65" r="16.45" fill="#0c0c0c"/><circle cx="24" cy="24.65" r="14.9" fill="url(#gr)"/><circle cx="24" cy="24.65" r="11.55" fill="url(#gf)"/><path d="M20.95 29.93L19.60 32.27" stroke="#e6e6e6" stroke-width="2.2" stroke-linecap="round"/></svg><div class="t" style="left:436.0px;top:608.73px;width:120px;font-size:12px;line-height:16px;color:#bebebe;">Freq 1</div><div class="v" style="left:536px;top:520px;width:48px;height:16px"></div><div class="vt" style="left:536px;top:520.66px;width:48px">0.0</div><div class="t" style="left:500.0px;top:537.03px;width:120px;font-size:12px;line-height:16px;color:#bebebe;">Gain 2</div><svg class="k" style="left:536px;top:559px" width="48" height="48"><path d="M14.76 40.65A18.48 18.48 0 1 1 33.24 40.65" stroke="#1c1c1e" stroke-width="4.05" fill="none"/><path d="M15.00 40.24A18.0 18.0 0 1 1 33.00 40.24" stroke="#d01b20" stroke-width="2.9" fill="none"/><circle cx="24" cy="24.65" r="16.45" fill="#0c0c0c"/><circle cx="24" cy="24.65" r="14.9" fill="url(#gr)"/><circle cx="24" cy="24.65" r="11.55" fill="url(#gf)"/><path d="M27.05 29.93L28.40 32.27" stroke="#e6e6e6" stroke-width="2.2" stroke-linecap="round"/></svg><div class="t" style="left:500.0px;top:608.73px;width:120px;font-size:12px;line-height:16px;color:#bebebe;">Freq 2</div><div class="v" style="left:616px;top:520px;width:48px;height:16px"></div><div class="vt" style="left:616px;top:520.66px;width:48px">100.0</div><div class="t" style="left:580.0px;top:537.03px;width:120px;font-size:12px;line-height:16px;color:#bebebe;">Depth</div><svg class="k" style="left:616px;top:559px" width="48" height="48"><path d="M14.76 40.65A18.48 18.48 0 1 1 33.24 40.65" stroke="#1c1c1e" stroke-width="4.05" fill="none"/><path d="M15.00 40.24A18.0 18.0 0 0 1 7.10 30.84" stroke="#d01b20" stroke-width="2.9" fill="none"/><circle cx="24" cy="24.65" r="16.45" fill="#0c0c0c"/><circle cx="24" cy="24.65" r="14.9" fill="url(#gr)"/><circle cx="24" cy="24.65" r="11.55" fill="url(#gf)"/><path d="M18.27 26.75L15.74 27.67" stroke="#e6e6e6" stroke-width="2.2" stroke-linecap="round"/></svg><div class="t" style="left:580.0px;top:608.73px;width:120px;font-size:12px;line-height:16px;color:#bebebe;">Rate</div><div class="v" style="left:680px;top:520px;width:48px;height:16px"></div><div class="vt" style="left:680px;top:520.66px;width:48px">0.0</div><div class="t" style="left:644.0px;top:537.03px;width:120px;font-size:12px;line-height:16px;color:#bebebe;">Mix</div><svg class="k" style="left:680px;top:559px" width="48" height="48"><path d="M14.76 40.65A18.48 18.48 0 1 1 33.24 40.65" stroke="#1c1c1e" stroke-width="4.05" fill="none"/><path d="M15.00 40.24A18.0 18.0 0 1 1 41.90 22.77" stroke="#d01b20" stroke-width="2.9" fill="none"/><circle cx="24" cy="24.65" r="16.45" fill="#0c0c0c"/><circle cx="24" cy="24.65" r="14.9" fill="url(#gr)"/><circle cx="24" cy="24.65" r="11.55" fill="url(#gf)"/><path d="M30.07 24.01L32.75 23.73" stroke="#e6e6e6" stroke-width="2.2" stroke-linecap="round"/></svg><div class="t" style="left:644.0px;top:608.73px;width:120px;font-size:12px;line-height:16px;color:#bebebe;">Delay</div><div class="v" style="left:760px;top:520px;width:48px;height:16px"></div><div class="vt" style="left:760px;top:520.66px;width:48px">--</div><div class="t" style="left:724.0px;top:537.03px;width:120px;font-size:12px;line-height:16px;color:#bebebe;">Sync</div><svg class="k" style="left:760px;top:559px" width="48" height="48"><path d="M14.76 40.65A18.48 18.48 0 1 1 33.24 40.65" stroke="#1c1c1e" stroke-width="4.05" fill="none"/><path d="M15.00 40.24A18.0 18.0 0 0 1 6.01 23.99" stroke="#d01b20" stroke-width="2.9" fill="none"/><circle cx="24" cy="24.65" r="16.45" fill="#0c0c0c"/><circle cx="24" cy="24.65" r="14.9" fill="url(#gr)"/><circle cx="24" cy="24.65" r="11.55" fill="url(#gf)"/><path d="M17.90 24.43L15.21 24.33" stroke="#e6e6e6" stroke-width="2.2" stroke-linecap="round"/></svg><div class="t" style="left:724.0px;top:608.73px;width:120px;font-size:12px;line-height:16px;color:#bebebe;">Time</div><div class="v" style="left:824px;top:520px;width:48px;height:16px"></div><div class="vt" style="left:824px;top:520.66px;width:48px">0.0</div><div class="t" style="left:788.0px;top:537.03px;width:120px;font-size:12px;line-height:16px;color:#bebebe;">Width</div><svg class="k" style="left:824px;top:559px" width="48" height="48"><path d="M14.76 40.65A18.48 18.48 0 1 1 33.24 40.65" stroke="#1c1c1e" stroke-width="4.05" fill="none"/><path d="M15.00 40.24A18.0 18.0 0 0 1 24.00 6.65" stroke="#d01b20" stroke-width="2.9" fill="none"/><circle cx="24" cy="24.65" r="16.45" fill="#0c0c0c"/><circle cx="24" cy="24.65" r="14.9" fill="url(#gr)"/><circle cx="24" cy="24.65" r="11.55" fill="url(#gf)"/><path d="M24.00 18.55L24.00 15.85" stroke="#e6e6e6" stroke-width="2.2" stroke-linecap="round"/></svg><div class="t" style="left:788.0px;top:608.73px;width:120px;font-size:12px;line-height:16px;color:#bebebe;">Feedback</div><div class="v" style="left:888px;top:520px;width:48px;height:16px"></div><div class="vt" style="left:888px;top:520.66px;width:48px">0.0</div><div class="t" style="left:852.0px;top:537.03px;width:120px;font-size:12px;line-height:16px;color:#bebebe;">Mix</div><svg class="k" style="left:888px;top:559px" width="48" height="48"><path d="M14.76 40.65A18.48 18.48 0 1 1 33.24 40.65" stroke="#1c1c1e" stroke-width="4.05" fill="none"/><circle cx="24" cy="24.65" r="16.45" fill="#0c0c0c"/><circle cx="24" cy="24.65" r="14.9" fill="url(#gr)"/><circle cx="24" cy="24.65" r="11.55" fill="url(#gf)"/><path d="M20.95 29.93L19.60 32.27" stroke="#e6e6e6" stroke-width="2.2" stroke-linecap="round"/></svg><div class="t" style="left:852.0px;top:608.73px;width:120px;font-size:12px;line-height:16px;color:#bebebe;">Lo Cut</div><div class="v" style="left:968px;top:520px;width:48px;height:16px"></div><div class="vt" style="left:968px;top:520.66px;width:48px">100.0</div><div class="t" style="left:932.0px;top:537.03px;width:120px;font-size:12px;line-height:16px;color:#bebebe;">Width</div><svg class="k" style="left:968px;top:559px" width="48" height="48"><path d="M14.76 40.65A18.48 18.48 0 1 1 33.24 40.65" stroke="#1c1c1e" stroke-width="4.05" fill="none"/><path d="M15.00 40.24A18.0 18.0 0 0 1 24.00 6.65" stroke="#d01b20" stroke-width="2.9" fill="none"/><circle cx="24" cy="24.65" r="16.45" fill="#0c0c0c"/><circle cx="24" cy="24.65" r="14.9" fill="url(#gr)"/><circle cx="24" cy="24.65" r="11.55" fill="url(#gf)"/><path d="M24.00 18.55L24.00 15.85" stroke="#e6e6e6" stroke-width="2.2" stroke-linecap="round"/></svg><div class="t" style="left:932.0px;top:608.73px;width:120px;font-size:12px;line-height:16px;color:#bebebe;">Size</div><div class="v" style="left:1032px;top:520px;width:48px;height:16px"></div><div class="vt" style="left:1032px;top:520.66px;width:48px">0.0</div><div class="t" style="left:996.0px;top:537.03px;width:120px;font-size:12px;line-height:16px;color:#bebebe;">Mix</div><svg class="k" style="left:1032px;top:559px" width="48" height="48"><path d="M14.76 40.65A18.48 18.48 0 1 1 33.24 40.65" stroke="#1c1c1e" stroke-width="4.05" fill="none"/><path d="M15.00 40.24A18.0 18.0 0 0 1 24.00 6.65" stroke="#d01b20" stroke-width="2.9" fill="none"/><circle cx="24" cy="24.65" r="16.45" fill="#0c0c0c"/><circle cx="24" cy="24.65" r="14.9" fill="url(#gr)"/><circle cx="24" cy="24.65" r="11.55" fill="url(#gf)"/><path d="M24.00 18.55L24.00 15.85" stroke="#e6e6e6" stroke-width="2.2" stroke-linecap="round"/></svg><div class="t" style="left:996.0px;top:608.73px;width:120px;font-size:12px;line-height:16px;color:#bebebe;">Damping</div>
<div class="pbot"></div>
</body></html>
